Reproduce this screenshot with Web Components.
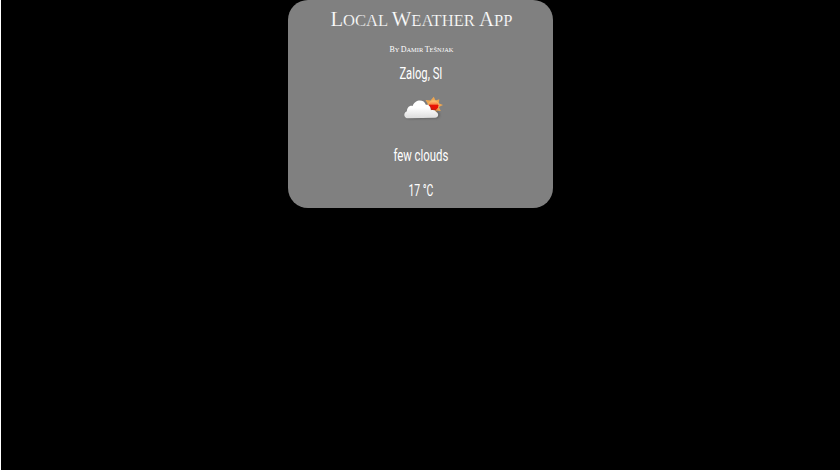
<!DOCTYPE html>
<html lang="en"><head><meta charset="utf-8"><title>Local Weather App</title>
<style>html,body{margin:0;height:100%;background:#000;overflow:hidden}</style></head>
<body><weather-app></weather-app>
<script>
// One line of text, fitted to a given width.
customElements.define('fit-text', class extends HTMLElement {
  connectedCallback() {
    const a = n => this.getAttribute(n);
    this.attachShadow({mode: 'open'}).innerHTML = `<style>
      :host{display:block;width:${a('width')}px;height:${a('height')}px}
      svg{display:block;overflow:visible}
      text{fill:#fff;font-family:var(--face);font-size:${a('size')}px;stroke:#808080;stroke-width:var(--thin,0)}
      .s{font-size:.8em}
    </style><svg width="${a('width')}" height="${a('height')}"><text x=".4" y="${a('base')}" textLength="${a('width')}" lengthAdjust="spacingAndGlyphs"></text></svg>`;
    const t = this.shadowRoot.querySelector('text');
    if (!this.hasAttribute('caps')) { t.textContent = this.textContent; return; }
    for (const part of this.textContent.match(/[A-Z]|[^A-Z]+/g)) {
      const s = document.createElementNS('http://www.w3.org/2000/svg', 'tspan');
      if (!/[A-Z]/.test(part)) s.setAttribute('class', 's');
      s.textContent = part.toUpperCase();
      t.append(s);
    }
  }
});
customElements.define('weather-icon', class extends HTMLElement {
  constructor() {
    super();
    this.attachShadow({mode: 'open'}).innerHTML = `<style>:host{display:block;width:50px;height:50px}svg{display:block}</style>
    <svg width="50" height="50" viewBox="0 0 50 50">
      <defs><linearGradient id="c" x1="0" y1="0" x2="0" y2="1"><stop offset=".4" stop-color="#fff"/><stop offset="1" stop-color="#dcdcdc"/></linearGradient>
      <linearGradient id="r" x1="0" y1="0" x2="0" y2="1"><stop offset="0" stop-color="#ffca78"/><stop offset=".35" stop-color="#f98b48"/><stop offset=".48" stop-color="#e91505"/><stop offset="1" stop-color="#f31400"/></linearGradient>
      <filter id="b" x="-20%" y="-20%" width="140%" height="150%"><feGaussianBlur stdDeviation=".9"/></filter></defs>
      <path d="M37.8 12.7L39.5 16.6L43.3 15.2L42.7 19.2L47 21L42.8 23L44.8 27L40.8 26.7L40.3 30.6L36.5 27.5L31 25L31.8 20L29.5 16L34.5 16.5Z" fill="#eda651"/>
      <circle cx="37.7" cy="21.6" r="5.2" fill="url(#r)" stroke="#f0be6c" stroke-width=".8"/>
      <g transform="translate(3.2 .2) scale(1.02)">
      <path d="M10 34.2C5.4 34.2 4.6 27.5 9.2 26.6C9.3 23.3 12.2 21.9 14.2 22.9C15.9 15.7 25.4 14.2 27.1 21.6C29.9 20.7 31.7 22.6 31.7 25.4C34.5 24.4 36.6 24.8 38 27C41.2 28.7 39.8 33.7 36.3 33.7Z" fill="#444" opacity=".5" filter="url(#b)"/>
      <path d="M9 33.5C4.3 33.5 3.7 27.8 7.5 26.4C7.8 22.7 10.5 20.3 13.2 21.4C15 14.7 24.6 14 26.1 20.2C29 19.5 31.2 22.2 31 25.5C33.5 24.8 35.5 25.4 36.2 27.3C39.5 28.5 38.5 33 35.3 33Z" fill="url(#c)"/></g>
    </svg>`;
  }
});
customElements.define('weather-card', class extends HTMLElement {
  constructor() {
    super();
    this.attachShadow({mode: 'open'}).innerHTML = `<style>:host{display:flex;flex-direction:column;align-items:center;box-sizing:border-box;width:265px;height:208px;border-radius:20px;background:#808080}</style><slot></slot>`;
  }
});
customElements.define('weather-app', class extends HTMLElement {
  constructor() {
    super();
    this.attachShadow({mode: 'open'}).innerHTML = `<style>
      :host{display:flex;justify-content:center;align-items:flex-start;box-sizing:border-box;height:100vh;border-left:1px solid #fff}
      .serif{--face:"Liberation Serif",serif}
      .title{--thin:.2px}
      .sans{--face:"Roboto","Liberation Sans",sans-serif}
    </style><weather-card>
      <fit-text class="serif title" caps width="182" height="40" base="26" size="20">Local Weather App</fit-text>
      <fit-text class="serif" caps width="64" height="22" base="12.3" size="7.5">By Damir Tešnjak</fit-text>
      <fit-text class="sans" width="43" height="22" base="17.3" size="16">Zalog, SI</fit-text>
      <weather-icon></weather-icon>
      <fit-text class="sans" width="55" height="35" base="27" size="16">few clouds</fit-text>
      <fit-text class="sans" width="25" height="35" base="27" size="16">17 °C</fit-text>
    </weather-card>`;
  }
});
</script></body></html>
